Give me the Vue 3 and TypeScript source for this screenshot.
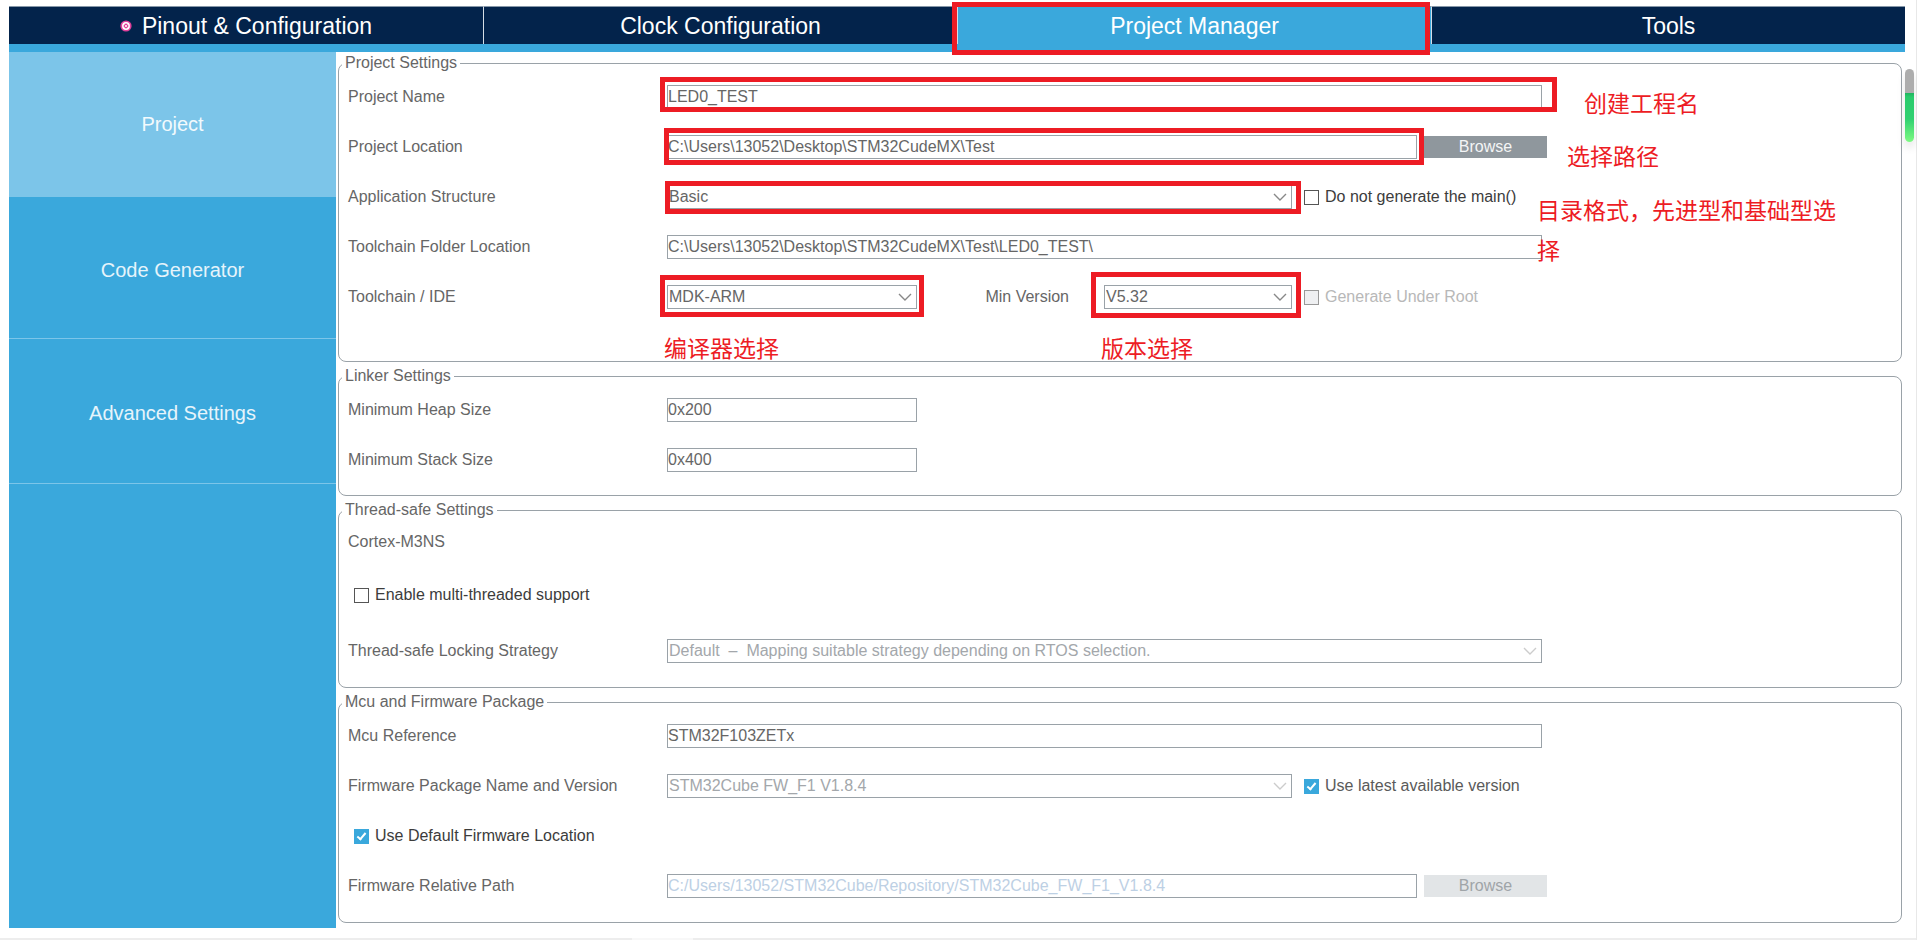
<script setup lang="ts">
import { ref } from 'vue'

const tabs = ['Pinout & Configuration', 'Clock Configuration', 'Project Manager', 'Tools']
const activeTab = ref('Project Manager')

const sections = ['Project', 'Code Generator', 'Advanced Settings']
const activeSection = ref('Project')

const projectName = ref('LED0_TEST')
const projectLocation = ref('C:\\Users\\13052\\Desktop\\STM32CudeMX\\Test')
const toolchainFolder = ref('C:\\Users\\13052\\Desktop\\STM32CudeMX\\Test\\LED0_TEST\\')
const heapSize = ref('0x200')
const stackSize = ref('0x400')
const mcuReference = ref('STM32F103ZETx')
const firmwarePath = ref('C:/Users/13052/STM32Cube/Repository/STM32Cube_FW_F1_V1.8.4')

const skipMain = ref(false)
const underRoot = ref(false)
const multiThreaded = ref(false)
const useLatest = ref(true)
const defaultLocation = ref(true)
</script>

<template>
  <div class="app">
    <nav class="tabs">
      <button
        v-for="tab in tabs"
        :key="tab"
        type="button"
        class="tab"
        :class="{ active: tab === activeTab }"
        @click="activeTab = tab"
      >
        <svg v-if="tab === tabs[0]" class="tab-icon" viewBox="0 0 12 12" aria-hidden="true">
          <circle cx="6" cy="6" r="5.6" fill="#e0409a" />
          <circle cx="6" cy="6" r="3.2" fill="none" stroke="#fff" stroke-width="1.5" />
          <path d="M4.4 4.4l3.2 3.2M7.6 4.4l-3.2 3.2" stroke="#fbd5e8" stroke-width="1" />
        </svg>
        <span>{{ tab }}</span>
        <span v-if="tab === 'Project Manager'" class="mark mark-tab"></span>
      </button>
    </nav>

    <div class="body">
      <aside class="sidebar">
        <button
          v-for="section in sections"
          :key="section"
          type="button"
          class="section"
          :class="{ active: section === activeSection }"
          @click="activeSection = section"
        >
          {{ section }}
        </button>
      </aside>

      <main class="content">
        <fieldset class="group group-project">
          <legend>Project Settings</legend>
          <div class="row">
            <label for="name">Project Name</label>
            <div class="field span-full">
              <input id="name" v-model="projectName" type="text" />
              <span class="mark mark-name"></span>
            </div>
            <p class="note note-name">创建工程名</p>
          </div>
          <div class="row">
            <label for="location">Project Location</label>
            <div class="field span-path">
              <input id="location" v-model="projectLocation" type="text" />
              <span class="mark mark-location"></span>
            </div>
            <button type="button" class="browse">Browse</button>
            <p class="note note-location">选择路径</p>
          </div>
          <div class="row">
            <label for="structure">Application Structure</label>
            <div class="field span-wide">
              <select id="structure"><option>Basic</option></select>
              <svg class="chevron" viewBox="0 0 14 8" aria-hidden="true"><path d="M1 1l6 6 6-6" /></svg>
              <span class="mark mark-structure"></span>
            </div>
            <label class="check after-wide"><input v-model="skipMain" type="checkbox" />Do not generate the main()</label>
            <p class="note note-structure">目录格式，先进型和基础型选择</p>
          </div>
          <div class="row">
            <label for="folder">Toolchain Folder Location</label>
            <div class="field span-full">
              <input id="folder" v-model="toolchainFolder" type="text" />
            </div>
          </div>
          <div class="row">
            <label for="toolchain">Toolchain / IDE</label>
            <div class="field span-short">
              <select id="toolchain"><option>MDK-ARM</option></select>
              <svg class="chevron" viewBox="0 0 14 8" aria-hidden="true"><path d="M1 1l6 6 6-6" /></svg>
              <span class="mark mark-toolchain"></span>
            </div>
            <label for="version" class="version-label">Min Version</label>
            <div class="field span-version">
              <select id="version"><option>V5.32</option></select>
              <svg class="chevron" viewBox="0 0 14 8" aria-hidden="true"><path d="M1 1l6 6 6-6" /></svg>
              <span class="mark mark-version"></span>
            </div>
            <label class="check after-wide muted"><input v-model="underRoot" type="checkbox" disabled />Generate Under Root</label>
            <p class="note note-toolchain">编译器选择</p>
            <p class="note note-version">版本选择</p>
          </div>
        </fieldset>

        <fieldset class="group group-linker">
          <legend>Linker Settings</legend>
          <div class="row">
            <label for="heap">Minimum Heap Size</label>
            <div class="field span-short"><input id="heap" v-model="heapSize" type="text" /></div>
          </div>
          <div class="row">
            <label for="stack">Minimum Stack Size</label>
            <div class="field span-short"><input id="stack" v-model="stackSize" type="text" /></div>
          </div>
        </fieldset>

        <fieldset class="group group-thread">
          <legend>Thread-safe Settings</legend>
          <p class="core">Cortex-M3NS</p>
          <label class="check check-row"><input v-model="multiThreaded" type="checkbox" />Enable multi-threaded support</label>
          <div class="row">
            <label for="strategy">Thread-safe Locking Strategy</label>
            <div class="field span-full">
              <select id="strategy" disabled>
                <option>Default&nbsp; –&nbsp; Mapping suitable strategy depending on RTOS selection.</option>
              </select>
              <svg class="chevron faint" viewBox="0 0 14 8" aria-hidden="true"><path d="M1 1l6 6 6-6" /></svg>
            </div>
          </div>
        </fieldset>

        <fieldset class="group group-mcu">
          <legend>Mcu and Firmware Package</legend>
          <div class="row">
            <label for="mcu">Mcu Reference</label>
            <div class="field span-full"><input id="mcu" v-model="mcuReference" type="text" /></div>
          </div>
          <div class="row">
            <label for="firmware">Firmware Package Name and Version</label>
            <div class="field span-wide">
              <select id="firmware" disabled><option>STM32Cube FW_F1 V1.8.4</option></select>
              <svg class="chevron faint" viewBox="0 0 14 8" aria-hidden="true"><path d="M1 1l6 6 6-6" /></svg>
            </div>
            <label class="check after-wide soft"><input v-model="useLatest" type="checkbox" />Use latest available version</label>
          </div>
          <label class="check check-row short"><input v-model="defaultLocation" type="checkbox" />Use Default Firmware Location</label>
          <div class="row">
            <label for="path">Firmware Relative Path</label>
            <div class="field span-path"><input id="path" v-model="firmwarePath" type="text" disabled /></div>
            <button type="button" class="browse" disabled>Browse</button>
          </div>
        </fieldset>
      </main>
    </div>

    <div class="scroll-thumb"></div>
    <div class="bottom-track"><span></span></div>
  </div>
</template>

<style>
body {
  margin: 0;
  background: #fff;
}
</style>

<style scoped>
.app {
  --blue: #3aa8dc;
  --navy: #03234b;
  --line: #9aa2a8;
  --red: #ed1c24;
  position: relative;
  box-sizing: border-box;
  display: flex;
  flex-direction: column;
  min-height: 100vh;
  padding: 6px 11px 0 9px;
  border-right: 1px solid #e8e8e8;
  color: #666;
  font-family: "Liberation Sans", Arial, "Noto Sans CJK SC", sans-serif;
  font-size: 16px;
  line-height: 18px;
}

button,
input,
select {
  box-sizing: border-box;
  margin: 0;
  border-radius: 0;
  font: inherit;
}

.tabs {
  display: grid;
  grid-template-columns: repeat(4, 1fr);
  border-bottom: 8px solid var(--blue);
  background: var(--navy);
}

.tab {
  position: relative;
  display: flex;
  align-items: center;
  justify-content: center;
  gap: 10px;
  height: 38px;
  padding: 0;
  border: 0;
  border-top: 1px solid #8697a8;
  border-left: 1px solid #d5dde5;
  background: var(--navy);
  color: #fff;
  font-size: 23px;
}

.tab:first-child {
  border-left: 0;
}

.tab.active {
  background: var(--blue);
}

.tab-icon {
  width: 12px;
  height: 12px;
}

.body {
  flex: 1;
  display: flex;
  gap: 2px;
}

.sidebar {
  flex: 0 0 327px;
  display: flex;
  flex-direction: column;
  margin-bottom: 12px;
  background: var(--blue);
}

.section {
  height: 145px;
  padding: 0;
  border: 0;
  border-bottom: 1px solid #7cc5e9;
  background: var(--blue);
  color: #e6f4fb;
  font-size: 20px;
}

.section:nth-child(2) {
  height: 142px;
}

.section + .section {
  padding-top: 4px;
}

.section.active {
  background: #7cc5e9;
  color: #f2fafd;
}

.content {
  flex: 1;
  display: flex;
  flex-direction: column;
  gap: 5px;
  min-width: 0;
  padding: 2px 3px 0 0;
}

.group {
  min-width: 0;
  margin: 0;
  padding: 0 4px 0 9px;
  border: 1px solid var(--line);
  border-radius: 8px;
}

.group legend {
  margin-left: -6px;
  padding: 0 3px;
}

.group-project {
  padding-bottom: 39px;
}

.group-linker {
  padding-bottom: 10px;
}

.group-thread {
  padding-bottom: 11px;
}

.group-mcu {
  padding-bottom: 11px;
}

.row {
  position: relative;
  display: grid;
  grid-template-columns:
    319px minmax(0, 250fr) minmax(0, 187fr) minmax(0, 188fr) minmax(0, 125fr)
    minmax(0, 125fr) minmax(0, 5fr) minmax(0, 350fr);
  align-items: center;
  height: 50px;
}

.row > * {
  grid-row: 1;
}

.field {
  position: relative;
  display: flex;
}

.span-short {
  grid-column: 2 / 3;
}

.span-version {
  grid-column: 4 / 5;
}

.span-wide {
  grid-column: 2 / 5;
}

.span-path {
  grid-column: 2 / 6;
}

.span-full {
  grid-column: 2 / 7;
}

.version-label {
  grid-column: 3 / 4;
  justify-self: end;
  margin-right: 35px;
}

.field input,
.field select {
  width: 100%;
  height: 24px;
  padding: 0;
  border: 1px solid var(--line);
  outline: 0;
  background: #fff;
  color: #666;
  opacity: 1;
}

.field select {
  appearance: none;
  padding: 0 24px 0 1px;
}

.field select:disabled {
  color: #a3a7ab;
}

.field input:disabled {
  color: #bdd0e4;
}

.chevron {
  position: absolute;
  top: 8px;
  right: 5px;
  width: 14px;
  height: 8px;
  fill: none;
  stroke: #888;
  stroke-width: 1.4;
  pointer-events: none;
}

.chevron.faint {
  stroke: #ccc;
}

.browse {
  grid-column: 6 / 8;
  height: 22px;
  margin-left: 7px;
  padding: 0;
  border: 0;
  background: #8f979d;
  color: #f4f5f6;
}

.browse:disabled {
  background: #e2e5e7;
  color: #9fa4a8;
}

.check {
  display: flex;
  align-items: center;
  gap: 6px;
  color: #3c3c3c;
  white-space: nowrap;
}

.check.soft {
  color: #5a5a5a;
}

.check.muted {
  color: #b8b8b8;
}

.after-wide {
  grid-column: 5 / 8;
  margin-left: 12px;
}

.check-row {
  height: 62px;
  padding-left: 6px;
}

.check-row.short {
  height: 50px;
}

.check input {
  appearance: none;
  position: relative;
  flex: none;
  width: 15px;
  height: 15px;
  border: 1px solid #555;
  background: #fff;
}

.check input:disabled {
  border-color: #999;
  background: #eff0f2;
}

.check input:checked {
  border-color: var(--blue);
  background: var(--blue);
}

.check input:checked::after {
  content: "";
  position: absolute;
  top: 1px;
  left: 4px;
  width: 3px;
  height: 7px;
  border: solid #fff;
  border-width: 0 2px 2px 0;
  transform: rotate(40deg);
}

.core {
  margin: 0;
  line-height: 45px;
}

/* Red call-outs laid over the form */
.mark {
  position: absolute;
  z-index: 1;
  border: 5px solid var(--red);
  pointer-events: none;
}

.mark-tab {
  inset: -5px 1px -11px -6px;
}

.mark-name {
  inset: -8px -15px -3px -7px;
}

.mark-location {
  inset: -7px -7px -6px -3px;
}

.mark-structure {
  inset: -4px -9px -5px -2px;
}

.mark-toolchain {
  inset: -10px -7px -8px -7px;
}

.mark-version {
  inset: -13px -9px -9px -13px;
}

.note {
  position: absolute;
  z-index: 1;
  margin: 0;
  color: var(--red);
  font-family: "Noto Sans CJK SC", sans-serif;
  font-size: 23px;
  font-weight: 400;
  line-height: 40px;
  white-space: nowrap;
}

.note-name {
  grid-column: 8 / 9;
  top: 10px;
  left: 37px;
}

.note-location {
  grid-column: 8 / 9;
  top: 13px;
  left: 20px;
}

.note-structure {
  grid-column: 8 / 9;
  top: 17px;
  left: -10px;
  width: 300px;
  white-space: normal;
}

.note-toolchain {
  grid-column: 2 / 3;
  top: 55px;
  left: -3px;
}

.note-version {
  grid-column: 4 / 5;
  top: 55px;
  left: -3px;
}

.scroll-thumb {
  position: absolute;
  top: 69px;
  right: 2px;
  width: 9px;
  height: 73px;
  border-radius: 5px;
  background: linear-gradient(#adadad 24px, #1fb45e 24px, #2acb6c 28px, #30d070 50px, #7dfa82 73px);
  box-shadow: 0 6px 8px rgba(0, 0, 0, 0.1);
}

.bottom-track {
  position: absolute;
  right: 0;
  bottom: 0;
  left: 0;
  height: 2px;
  background: #ededed;
}

.bottom-track span {
  display: block;
  width: 61px;
  height: 2px;
  margin-left: 33%;
  background: #f8f8f8;
}
</style>
